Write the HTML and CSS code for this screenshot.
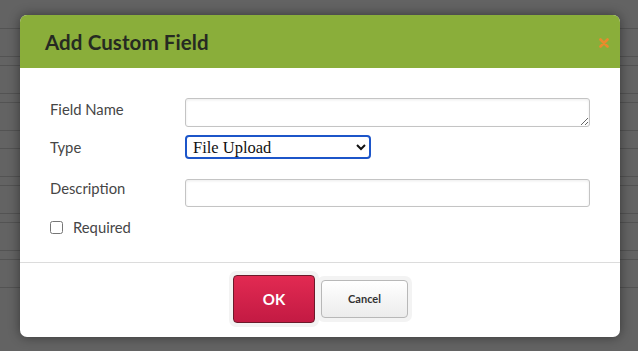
FILE: index.html
```html
<!DOCTYPE html>
<html lang="en">
<head>
  <meta charset="UTF-8">
  <title>Add Custom Field</title>
  <link rel="stylesheet" href="styles.css">
</head>
<body>
  <div class="backdrop">
    <div class="row"></div><div class="row short"></div>
    <div class="row"></div><div class="row short"></div>
    <div class="row"></div><div class="row mid"></div>
    <div class="row"></div><div class="row short"></div>
    <div class="row"></div><div class="row short"></div>
    <div class="row"></div><div class="row short"></div>
    <div class="row"></div><div class="row short"></div>
  </div>

  <div class="modal">
    <div class="modal-head">
      <h2>Add Custom Field</h2>
      <svg class="close" width="10" height="10" viewBox="0 0 10 10"><path d="M1.5 1.5 L8.5 8.5 M8.5 1.5 L1.5 8.5" stroke="#ea8a2c" stroke-width="2.6" stroke-linecap="round"/></svg>
    </div>
    <form class="modal-body">
      <div class="field">
        <label>Field Name</label>
        <textarea class="txt area"></textarea>
      </div>
      <div class="field type">
        <label>Type</label>
        <select class="sel">
          <option>File Upload</option>
        </select>
      </div>
      <div class="field desc">
        <label>Description</label>
        <input class="txt" type="text">
      </div>
      <label class="check"><input type="checkbox"> Required</label>
    </form>
    <div class="modal-foot">
      <span class="ring"><button class="btn ok">OK</button></span>
      <span class="ring second"><button class="btn cancel">Cancel</button></span>
    </div>
  </div>
</body>
</html>
```

FILE: styles.css
```css
body { margin: 0; background: #636363; font-family: Lato, "Liberation Sans", sans-serif; overflow: hidden; }
.backdrop { padding-top: 28px; }
.row { height: 28px; border-top: 1px solid #535353; box-sizing: border-box; }
.row.short { height: 9px; }
.row.mid { height: 18px; }

.modal { position: absolute; left: 20px; top: 15px; width: 600px; height: 322px; background: #fff; border-radius: 7px; box-shadow: 0 0 12px rgba(0,0,0,0.45); overflow: hidden; }
.modal-head { height: 53px; background: #8aae3a; display: flex; align-items: center; justify-content: space-between; padding: 0 11px 0 25px; }
.modal-head h2 { margin: 0; font-size: 20.5px; font-weight: 700; color: #262a22; letter-spacing: 0.1px; }
.close { margin-top: 2px; }

.modal-body { padding: 30px 30px 0; }
.field { display: flex; align-items: flex-start; }
.field label { width: 135px; font-size: 14.8px; color: #464646; }
.txt { width: 405px; height: 29px; box-sizing: border-box; border: 1px solid #c4c4c4; border-radius: 3px; box-shadow: inset 0 1px 3px rgba(0,0,0,0.08); margin: 0; padding: 4px 6px; font: inherit; }
.area { display: block; resize: vertical; }
.field.type { margin-top: 8px; align-items: center; }
.sel { width: 186px; height: 24px; border: 2px solid #1c55c9; border-radius: 4px; font-family: "Liberation Serif", serif; font-size: 16.5px; color: #111; background: #fff; padding: 0 2px; }
.field:first-child label { margin-top: 2px; }
.field.desc { margin-top: 20px; height: 28px; }
.field.desc label { margin-top: 0; }
.field.desc .txt { height: 28px; }
.check { display: flex; align-items: center; gap: 10px; margin-top: 11px; font-size: 14.8px; color: #464646; }
.check input { margin: 0; width: 13px; height: 13px; }

.modal-foot { position: absolute; left: 0; right: 0; bottom: 0; height: 75px; border-top: 1px solid #dcdcdc; display: flex; justify-content: center; align-items: center; padding: 0 0 3px 1px; box-sizing: border-box; }
.ring { display: inline-block; padding: 4px; background: #f3f3f3; border-radius: 7px; }
.ring.second { margin-left: -2px; }
.btn { display: block; border-radius: 4px; cursor: pointer; font-family: Lato, "Liberation Sans", sans-serif; font-weight: 700; }
.ok { width: 82px; height: 48px; background: linear-gradient(#e22a52, #c31a43); border: 1px solid #6b1a2a; color: #fff; font-size: 15px; }
.cancel { width: 87px; height: 38px; background: linear-gradient(#fff, #ececec); border: 1px solid #b8b8b8; color: #333; font-size: 11px; }
```
